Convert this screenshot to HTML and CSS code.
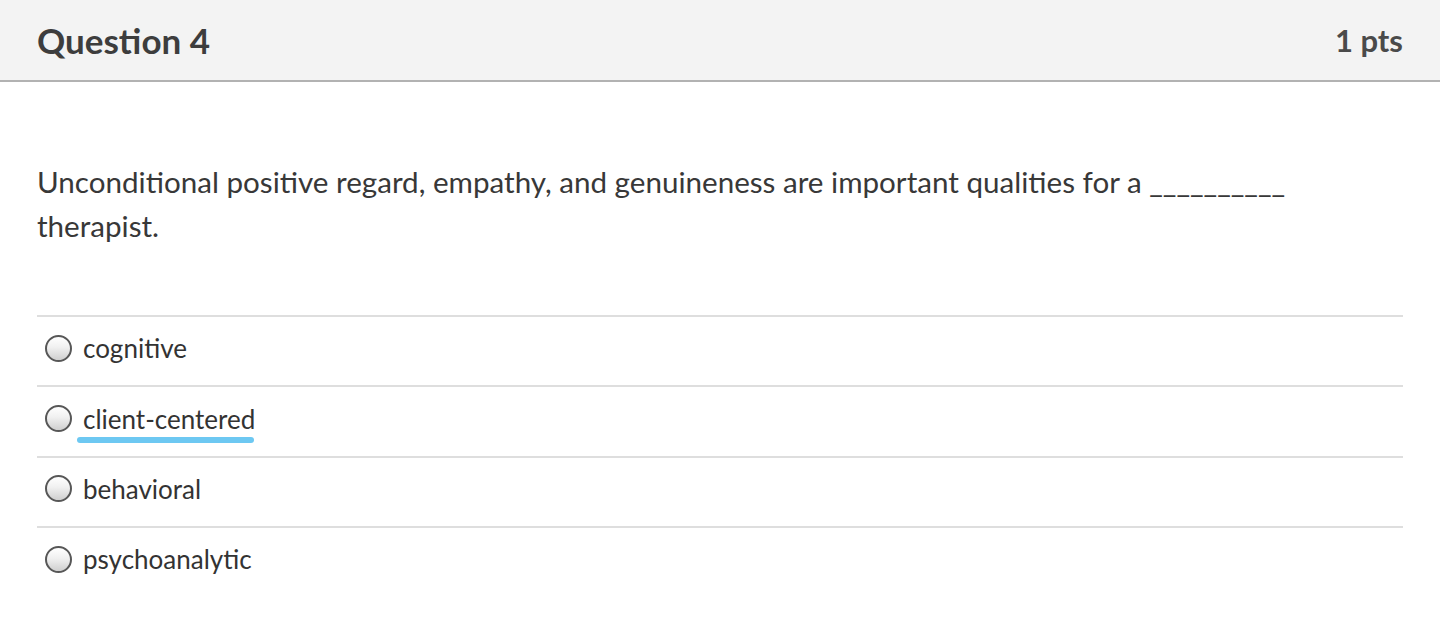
FILE: index.html
```html
<!DOCTYPE html>
<html lang="en">
<head>
<meta charset="utf-8">
<title>Question 4</title>
<link rel="stylesheet" href="styles.css">
</head>
<body>
<div class="question">
  <div class="q-header">
    <h2 class="q-title">Question 4</h2>
    <div class="q-points">1 pts</div>
  </div>
  <div class="q-body">
    <p class="q-text">Unconditional positive regard, empathy, and genuineness are important qualities for a __________ therapist.</p>
    <ul class="answers">
      <li class="answer"><span class="radio"></span><span class="label">cognitive</span></li>
      <li class="answer"><span class="radio"></span><span class="label marked">client-centered</span></li>
      <li class="answer"><span class="radio"></span><span class="label">behavioral</span></li>
      <li class="answer"><span class="radio"></span><span class="label">psychoanalytic</span></li>
    </ul>
  </div>
</div>
</body>
</html>
```

FILE: styles.css
```css
html, body {
  margin: 0;
  padding: 0;
  background: #ffffff;
}

body {
  font-family: Lato, "Open Sans", sans-serif;
  color: #3a3a3a;
  width: 1440px;
  height: 634px;
  overflow: hidden;
}

.q-header {
  display: flex;
  align-items: center;
  justify-content: space-between;
  height: 80px;
  padding: 0 37px;
  background: #f3f3f3;
  border-bottom: 2px solid #b2b2b2;
}

.q-title {
  margin: 0;
  font-size: 35px;
  font-weight: 700;
  color: #3d3d3d;
}

.q-points {
  font-size: 31px;
  font-weight: 700;
  color: #4a4a4a;
}

.q-body {
  padding: 78px 37px 0;
}

.q-text {
  margin: 0;
  font-size: 29.6px;
  line-height: 44px;
  color: #383838;
}

.answers {
  list-style: none;
  margin: 67px 0 0;
  padding: 0;
}

.answer {
  box-sizing: border-box;
  display: flex;
  align-items: center;
  height: 70.4px;
  border-top: 2px solid #dedede;
  padding: 0 0 6px 8px;
  gap: 11px;
}

.radio {
  box-sizing: border-box;
  width: 27px;
  height: 27px;
  border: 2px solid #575757;
  border-radius: 50%;
  background: linear-gradient(#ffffff 0%, #f0f0f0 45%, #cfcfcf 100%);
  flex: none;
}

.label {
  font-size: 26px;
  color: #333333;
  position: relative;
}

.label.marked::after {
  content: "";
  position: absolute;
  left: -6px;
  right: 1px;
  bottom: -8px;
  height: 6px;
  border-radius: 3px;
  background: #6dc8f2;
}
```
